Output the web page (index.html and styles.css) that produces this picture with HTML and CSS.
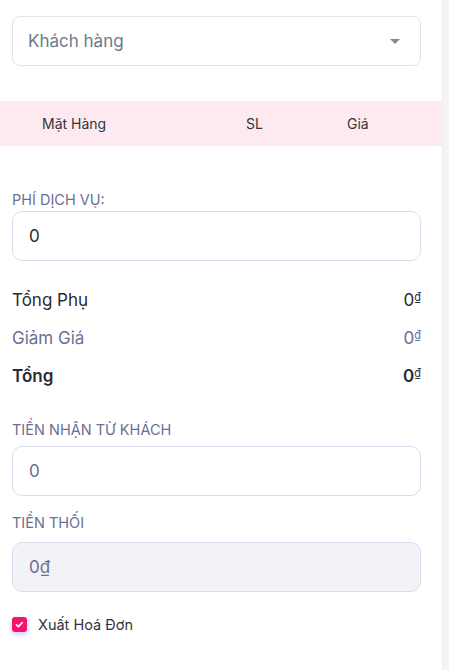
FILE: index.html
```html
<!DOCTYPE html>
<html lang="vi">
<head>
    <meta charset="UTF-8">
    <meta name="viewport" content="width=device-width, initial-scale=1.0">
    <title>Thanh toán</title>
    <link rel="stylesheet" href="styles.css">
</head>
<body>
    <div class="page">
        <div class="panel">
            <div class="select-box">
                <span class="placeholder">Khách hàng</span>
                <span class="caret"></span>
            </div>

            <div class="item-head">
                <span class="col-name">Mặt Hàng</span>
                <span class="col-qty">SL</span>
                <span class="col-price">Giá</span>
            </div>

            <div class="form-block">
                <label class="field-label first">PHÍ DỊCH VỤ:</label>
                <div class="field">0</div>

                <div class="totals">
                    <div class="total-row">
                        <span>Tổng Phụ</span>
                        <span>0<sup class="cur">₫</sup></span>
                    </div>
                    <div class="total-row muted">
                        <span>Giảm Giá</span>
                        <span>0<sup class="cur">₫</sup></span>
                    </div>
                    <div class="total-row strong">
                        <span>Tổng</span>
                        <span>0<sup class="cur">₫</sup></span>
                    </div>
                </div>

                <label class="field-label">TIỀN NHẬN TỪ KHÁCH</label>
                <div class="field soft">0</div>

                <label class="field-label">TIỀN THỐI</label>
                <div class="field soft disabled">0₫</div>

                <div class="check-row">
                    <span class="checkbox">
                        <svg viewBox="0 0 16 16" width="16" height="16"><path d="M4.2 8.3l2.4 2.3 5-5" fill="none" stroke="#fff" stroke-width="2" stroke-linecap="round" stroke-linejoin="round"/></svg>
                    </span>
                    <span>Xuất Hoá Đơn</span>
                </div>
            </div>
        </div>
        <div class="scroll-strip"></div>
    </div>
</body>
</html>
```

FILE: styles.css
```css
*{
    margin: 0;
    padding: 0;
    box-sizing: border-box;
}

body{
    font-family: Inter, "Noto Sans", sans-serif;
    background: #ffffff;
    color: #2b2b33;
}

.page{
    display: flex;
    height: 670px;
}

.panel{
    width: 442px;
    background: #ffffff;
    border-top-right-radius: 8px;
    padding-top: 16px;
}

.scroll-strip{
    width: 7px;
    background: #f4f4f7;
    border-left: 1px solid #ececf2;
}

.select-box{
    margin: 0 21px 0 12px;
    height: 50px;
    border: 1px solid #e3e4ea;
    border-radius: 8px;
    display: flex;
    align-items: center;
    justify-content: space-between;
    padding: 0 20px 0 15px;
}

.placeholder{
    font-size: 17px;
    color: #6c7a8c;
}

.caret{
    width: 0;
    height: 0;
    border-left: 5px solid transparent;
    border-right: 5px solid transparent;
    border-top: 5px solid #8a8a8a;
}

.item-head{
    margin-top: 35px;
    height: 45px;
    background: #fdeaf1;
    display: flex;
    align-items: center;
    font-size: 14px;
    color: #33343c;
}

.col-name{
    padding-left: 42px;
    width: 246px;
}

.col-qty{
    width: 101px;
}

.form-block{
    padding: 45px 21px 0 12px;
}

.field-label{
    display: block;
    font-size: 14.5px;
    line-height: 17px;
    color: #6b6f92;
    margin-bottom: 8px;
}

.field-label.first{
    margin-bottom: 3px;
}

.field{
    height: 50px;
    border: 1px solid #dcdcee;
    border-radius: 10px;
    display: flex;
    align-items: center;
    padding-left: 16px;
    font-size: 17px;
    color: #2b2b33;
}

.field.soft{
    color: #6b6f92;
}

.field.disabled{
    background: #f2f3f6;
}

.totals{
    padding: 29px 0 33px;
    display: flex;
    flex-direction: column;
    gap: 16px;
}

.total-row{
    display: flex;
    justify-content: space-between;
    align-items: baseline;
    font-size: 17px;
    color: #2b2b33;
    height: 22px;
}

.total-row.muted{
    color: #6b6f92;
}

.total-row.strong{
    font-weight: 600;
}

.cur{
    font-size: 11px;
    font-weight: 400;
    vertical-align: 5px;
    text-decoration: underline;
}

.field + .field-label{
    margin-top: 18px;
    margin-bottom: 11px;
}

.check-row{
    margin-top: 24px;
    display: flex;
    align-items: center;
    gap: 11px;
    font-size: 14.5px;
    color: #33343c;
}

.checkbox{
    width: 15px;
    height: 15px;
    border-radius: 3px;
    background: #f5136b;
    box-shadow: 0 2px 5px rgba(110, 90, 255, 0.35);
    display: flex;
    align-items: center;
    justify-content: center;
}

.checkbox svg{
    width: 13px;
    height: 13px;
}
```
